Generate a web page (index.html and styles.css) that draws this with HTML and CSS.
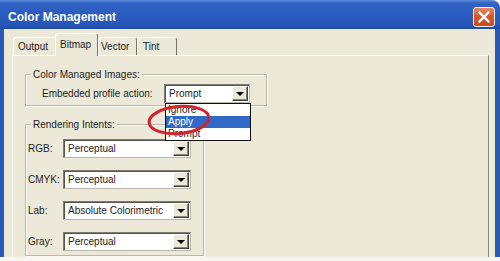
FILE: index.html
```html
<!DOCTYPE html>
<html>
<head>
<meta charset="utf-8">
<link rel="stylesheet" href="styles.css">
</head>
<body>
<div class="window">
  <div class="titlebar">
    <span class="title">Color Management</span>
    <span class="close"><svg width="20" height="18" viewBox="0 0 20 18"><path d="M5.5 4.5 L14.5 13.5 M14.5 4.5 L5.5 13.5" stroke="#fff" stroke-width="2.4" stroke-linecap="square"/></svg></span>
  </div>
  <div class="frame">
    <div class="tabs">
      <div class="tab tab-output">Output</div>
      <div class="tab tab-bitmap active">Bitmap</div>
      <div class="tab tab-vector">Vector</div>
      <div class="tab tab-tint">Tint</div>
    </div>
    <div class="panel">
      <fieldset class="group group-images">
        <legend>Color Managed Images:</legend>
        <div class="row-action">
          <span class="label">Embedded profile action:</span>
          <div class="combo combo-action">
            <div class="select"><span class="value">Prompt</span><span class="btn"><span class="tri"></span></span></div>
            <ul class="list">
              <li>Ignore</li>
              <li class="sel">Apply</li>
              <li>Prompt</li>
            </ul>
          </div>
        </div>
      </fieldset>
      <fieldset class="group group-intents">
        <legend>Rendering Intents:</legend>
        <div class="rows">
          <div class="row"><span class="label label-intent">RGB:</span><div class="combo combo-intent"><div class="select"><span class="value">Perceptual</span><span class="btn"><span class="tri"></span></span></div></div></div>
          <div class="row"><span class="label label-intent">CMYK:</span><div class="combo combo-intent"><div class="select"><span class="value">Perceptual</span><span class="btn"><span class="tri"></span></span></div></div></div>
          <div class="row"><span class="label label-intent">Lab:</span><div class="combo combo-intent"><div class="select"><span class="value">Absolute Colorimetric</span><span class="btn"><span class="tri"></span></span></div></div></div>
          <div class="row"><span class="label label-intent">Gray:</span><div class="combo combo-intent"><div class="select"><span class="value">Perceptual</span><span class="btn"><span class="tri"></span></span></div></div></div>
        </div>
      </fieldset>
    </div>
  </div>
  <div class="bottom-edge"></div>
  <svg class="circle" width="72" height="38" viewBox="0 0 72 38"><ellipse cx="34" cy="18" rx="30" ry="13.5" transform="rotate(-5 34 18)" fill="none" stroke="#d3232f" stroke-width="3"/></svg>
</div>
</body>
</html>
```
FILE: styles.css
```css
* { box-sizing: border-box; }
html, body { margin: 0; padding: 0; background: #fff; }
body {
  font-family: "Liberation Sans", Arial, sans-serif;
  font-size: 10px;
  color: #1c1c1c;
}
.window {
  position: relative;
  width: 500px;
  height: 261px;
  display: flex;
  flex-direction: column;
  overflow: hidden;
}
.titlebar {
  flex: none;
  height: 29px;
  display: flex;
  align-items: center;
  justify-content: space-between;
  padding: 4px 5px 0 8px;
  background: linear-gradient(180deg, #5e8edb 0px, #3163c4 3px, #2b5cbf 45%, #2757b8 85%, #1f4aa4 100%);
  border-top-right-radius: 8px;
}
.title {
  color: #fff;
  font-weight: bold;
  font-size: 12px;
  letter-spacing: 0;
}
.close {
  width: 22px;
  height: 20px;
  display: flex;
  align-items: center;
  justify-content: center;
  border: 1px solid #f3efe8;
  border-radius: 3px;
  background: linear-gradient(180deg, #e98a63 0%, #d9592e 45%, #c94a22 100%);
}
.frame {
  flex: 1;
  display: flex;
  flex-direction: column;
  background: #ece9d8;
  border-left: 4px solid #2b57b6;
  border-right: 5px solid #2b57b6;
  padding: 4px 6px 0 8px;
}
.tabs {
  display: flex;
  align-items: flex-end;
  height: 23px;
  padding-left: 1px;
  margin-bottom: -1px;
  position: relative;
  z-index: 2;
}
.tab {
  height: 18px;
  margin-bottom: 1px;
  padding: 2px 4px 0 4px;
  line-height: 13px;
  background: #ece9d8;
  border-top: 1px solid #fff;
  border-left: 1px solid #fff;
  border-right: 1px solid #77756b;
  border-radius: 3px 3px 0 0;
  white-space: nowrap;
}
.tab-output { width: 44px; }
.tab-bitmap { width: 43px; }
.tab-vector { width: 39px; padding-left: 2px; }
.tab-tint { width: 40px; padding-left: 5px; }
.tab.active {
  height: 23px;
  margin-bottom: 0;
  margin-left: -2px;
  padding-top: 4px;
  position: relative;
  z-index: 3;
}
.panel {
  flex: 1;
  display: flex;
  flex-direction: column;
  align-items: flex-start;
  padding-left: 12px;
  background: #ece9d8;
  border-top: 1px solid #fff;
  border-left: 1px solid #fff;
  border-right: 1px solid #86847a;
  box-shadow: 1px 0 0 #f6f4ec;
  position: relative;
  z-index: 1;
}
.group {
  margin: 12px 0 0 0;
  padding: 0;
  min-width: 0;
  border: 1px solid #bcb9aa;
  box-shadow: inset 1px 1px 0 #fbfaf5, 1px 1px 0 #fbfaf5;
}
.group legend {
  margin-left: 5px;
  padding: 0 2px;
  line-height: 13px;
  background: #ece9d8;
}
.group-images { width: 242px; }
.group-intents { width: 179px; }
.row-action {
  display: flex;
  align-items: center;
  padding: 3px 16px 2px 16px;
}
.row-action .combo { margin-left: auto; }
.rows {
  display: flex;
  flex-direction: column;
  gap: 12px;
  padding: 8px 12px 4px 2px;
}
.row {
  display: flex;
  align-items: center;
}
.label-intent { width: 35px; }
.combo { position: relative; }
.combo-action { width: 86px; }
.combo-intent { width: 128px; }
.select {
  display: flex;
  align-items: center;
  height: 19px;
  background: #fff;
  border: 1px solid;
  border-color: #7d7b72 #b9b7ab #b9b7ab #7d7b72;
  box-shadow: inset 1px 1px 0 #55544e;
  padding: 1px 1px 1px 3px;
}
.value {
  flex: 1;
  white-space: nowrap;
  overflow: hidden;
  padding-left: 1px;
}
.btn {
  flex: none;
  width: 16px;
  height: 15px;
  display: flex;
  align-items: center;
  justify-content: center;
  background: #ece9d8;
  border: 1px solid;
  border-color: #fff #3f3f3c #3f3f3c #fff;
  box-shadow: inset -1px -1px 0 #8a887d;
}
.tri {
  width: 0;
  height: 0;
  border-left: 4px solid transparent;
  border-right: 4px solid transparent;
  border-top: 4px solid #000;
  margin-top: 1px;
}
.list {
  position: absolute;
  top: 100%;
  left: 1px;
  width: 86px;
  margin: 0;
  padding: 0;
  list-style: none;
  background: #fff;
  border: 1px solid #111;
  z-index: 5;
}
.list li {
  height: 12px;
  line-height: 12px;
  padding-left: 2px;
}
.list li.sel {
  background: #316ac5;
  color: #fff;
}
.bottom-edge {
  flex: none;
  height: 4px;
  background: #f7f6f1;
}
.circle {
  position: absolute;
  left: 145px;
  top: 102px;
  z-index: 10;
}
```
